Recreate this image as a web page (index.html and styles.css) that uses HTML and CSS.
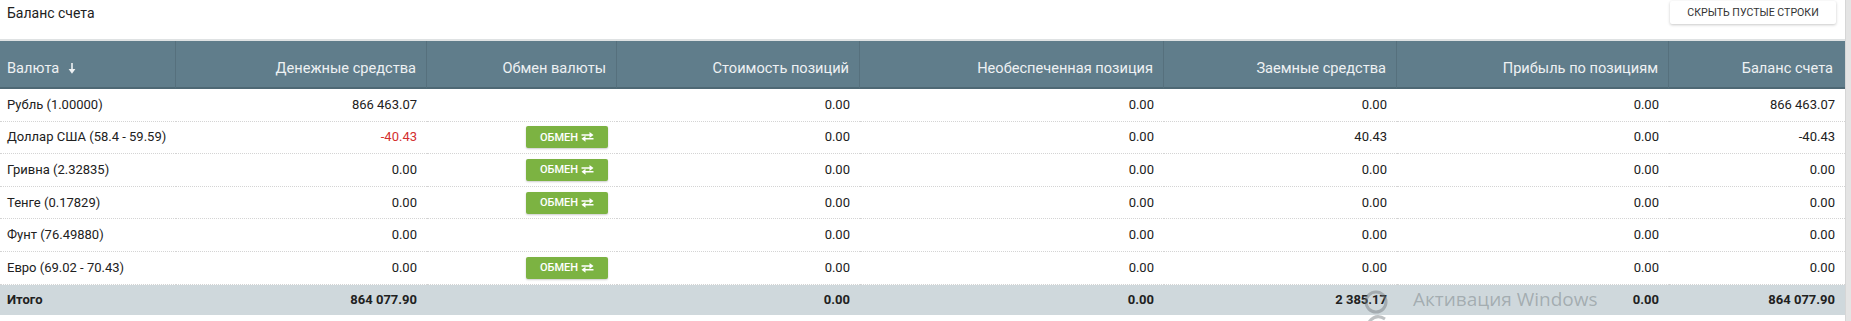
FILE: index.html
```html
<!DOCTYPE html>
<html lang="ru">
<head>
<meta charset="utf-8">
<title>Баланс счета</title>
<link rel="stylesheet" href="styles.css">
</head>
<body>
<div class="page">
  <div class="main">
    <div class="toolbar">
      <span class="title">Баланс счета</span>
      <button class="hide-btn">Скрыть пустые строки</button>
    </div>
    <table class="balance">
      <colgroup>
        <col class="c1"><col class="c2"><col class="c3"><col class="c4"><col class="c5"><col class="c6"><col class="c7"><col class="c8">
      </colgroup>
      <thead>
        <tr>
          <th class="left">Валюта <svg class="sort" width="8" height="11" viewBox="0 0 8 11"><path d="M4 0 V8" stroke="currentColor" stroke-width="1.6"/><path d="M0.6 6 H7.4 L4 10.8 Z" fill="currentColor"/></svg></th>
          <th>Денежные средства</th>
          <th>Обмен валюты</th>
          <th>Стоимость позиций</th>
          <th>Необеспеченная позиция</th>
          <th>Заемные средства</th>
          <th>Прибыль по позициям</th>
          <th>Баланс счета</th>
        </tr>
      </thead>
      <tbody>
        <tr>
          <td class="left">Рубль (1.00000)</td><td>866 463.07</td><td></td><td>0.00</td><td>0.00</td><td>0.00</td><td>0.00</td><td>866 463.07</td>
        </tr>
        <tr>
          <td class="left">Доллар США (58.4 - 59.59)</td><td class="neg">-40.43</td><td><button class="swap">ОБМЕН <svg width="13" height="10" viewBox="0 0 13 10"><path d="M0.5 2.2 H8.5 V0 L12.5 3 L8.5 6 V3.8 H0.5 Z" fill="currentColor"/><path d="M12.5 7 H4.5 V4.8 L0.5 7.8 L4.5 10.8 V8.6 H12.5 Z" fill="currentColor" transform="translate(0,-1)"/></svg></button></td><td>0.00</td><td>0.00</td><td>40.43</td><td>0.00</td><td>-40.43</td>
        </tr>
        <tr>
          <td class="left">Гривна (2.32835)</td><td>0.00</td><td><button class="swap">ОБМЕН <svg width="13" height="10" viewBox="0 0 13 10"><path d="M0.5 2.2 H8.5 V0 L12.5 3 L8.5 6 V3.8 H0.5 Z" fill="currentColor"/><path d="M12.5 7 H4.5 V4.8 L0.5 7.8 L4.5 10.8 V8.6 H12.5 Z" fill="currentColor" transform="translate(0,-1)"/></svg></button></td><td>0.00</td><td>0.00</td><td>0.00</td><td>0.00</td><td>0.00</td>
        </tr>
        <tr>
          <td class="left">Тенге (0.17829)</td><td>0.00</td><td><button class="swap">ОБМЕН <svg width="13" height="10" viewBox="0 0 13 10"><path d="M0.5 2.2 H8.5 V0 L12.5 3 L8.5 6 V3.8 H0.5 Z" fill="currentColor"/><path d="M12.5 7 H4.5 V4.8 L0.5 7.8 L4.5 10.8 V8.6 H12.5 Z" fill="currentColor" transform="translate(0,-1)"/></svg></button></td><td>0.00</td><td>0.00</td><td>0.00</td><td>0.00</td><td>0.00</td>
        </tr>
        <tr>
          <td class="left">Фунт (76.49880)</td><td>0.00</td><td></td><td>0.00</td><td>0.00</td><td>0.00</td><td>0.00</td><td>0.00</td>
        </tr>
        <tr>
          <td class="left">Евро (69.02 - 70.43)</td><td>0.00</td><td><button class="swap">ОБМЕН <svg width="13" height="10" viewBox="0 0 13 10"><path d="M0.5 2.2 H8.5 V0 L12.5 3 L8.5 6 V3.8 H0.5 Z" fill="currentColor"/><path d="M12.5 7 H4.5 V4.8 L0.5 7.8 L4.5 10.8 V8.6 H12.5 Z" fill="currentColor" transform="translate(0,-1)"/></svg></button></td><td>0.00</td><td>0.00</td><td>0.00</td><td>0.00</td><td>0.00</td>
        </tr>
      </tbody>
      <tfoot>
        <tr>
          <td class="left">Итого</td><td>864 077.90</td><td></td><td>0.00</td><td>0.00</td><td>2 385.17</td><td>0.00</td><td>864 077.90</td>
        </tr>
      </tfoot>
    </table>
  </div>
  <div class="scrollbar"></div>
  <div class="watermark">
    <svg class="wm-icon" width="34" height="34" viewBox="0 0 34 34"><circle cx="15" cy="13" r="10" fill="none" stroke="currentColor" stroke-width="3"/><path d="M8 33 Q15 24 24 30" fill="none" stroke="currentColor" stroke-width="3"/></svg>
    <span class="wm-text">Активация Windows</span>
  </div>
</div>
</body>
</html>
```

FILE: styles.css
```css
* { box-sizing: border-box; }

html, body {
  margin: 0;
  padding: 0;
  background: #ffffff;
}

body {
  font-family: Roboto, "Liberation Sans", Arial, sans-serif;
  color: #212121;
  font-size: 13px;
}

.page {
  position: relative;
  display: flex;
  width: 1851px;
  height: 321px;
  overflow: hidden;
}

.main {
  width: 1845px;
  flex: none;
}

.scrollbar {
  width: 6px;
  flex: none;
  background: #e4e4e4;
  border-left: 1px solid #d6d6d6;
}

.toolbar {
  height: 39px;
  display: flex;
  justify-content: space-between;
  align-items: flex-start;
  padding: 0 9px 0 7px;
}

.title {
  font-size: 14px;
  line-height: 16px;
  padding-top: 5px;
  color: #212121;
}

.hide-btn {
  margin-top: 1px;
  height: 23px;
  width: 166px;
  border: none;
  background: #ffffff;
  border-radius: 2px;
  box-shadow: 0 1px 3px rgba(0, 0, 0, 0.22);
  font-family: Roboto, "Liberation Sans", Arial, sans-serif;
  font-size: 10.6px;
  color: #333333;
  text-transform: uppercase;
  padding: 0;
}

.balance {
  width: 1845px;
  table-layout: fixed;
  border-collapse: separate;
  border-spacing: 0;
  border-top: 2px solid #dfe2e3;
}

.c1 { width: 176px; }
.c2 { width: 251px; }
.c3 { width: 190px; }
.c4 { width: 243px; }
.c5 { width: 304px; }
.c6 { width: 233px; }
.c7 { width: 272px; }
.c8 { width: 176px; }

.balance th {
  background: #607d8b;
  color: #eef1f3;
  font-weight: 400;
  font-size: 14.6px;
  line-height: 16px;
  height: 48px;
  padding: 19px 10px 11px 10px;
  text-align: right;
  border-right: 1px solid #56707d;
  border-bottom: 2px solid #4e6874;
  white-space: nowrap;
}

.balance th:last-child {
  border-right: none;
  padding-right: 12px;
}

.balance th.left,
.balance td.left {
  text-align: left;
  padding-left: 7px;
}

.sort {
  margin-left: 5px;
  vertical-align: -1px;
}

.balance td {
  height: 32.6px;
  padding: 0 10px;
  text-align: right;
  line-height: 16px;
  vertical-align: middle;
  border-bottom: 1px dotted #d4d4d4;
  white-space: nowrap;
}

.balance td.neg {
  color: #d32f2f;
}

.balance tfoot td {
  height: 30px;
  background: #cfd8dc;
  font-weight: 700;
  border-bottom: none;
}

.swap {
  display: inline-flex;
  align-items: center;
  justify-content: center;
  gap: 3px;
  width: 82px;
  height: 22px;
  margin-right: -1px;
  border: none;
  border-radius: 2px;
  background: #7cb342;
  color: #ffffff;
  font-family: Roboto, "Liberation Sans", Arial, sans-serif;
  font-size: 11px;
  font-weight: 500;
  box-shadow: 0 1px 2px rgba(0, 0, 0, 0.2);
  padding: 0;
  vertical-align: middle;
}

.watermark {
  position: absolute;
  left: 1361px;
  top: 289px;
  display: flex;
  align-items: flex-start;
  gap: 18px;
  color: rgba(110, 118, 122, 0.45);
  pointer-events: none;
}

.wm-icon {
  margin-top: 0;
}

.wm-text {
  font-family: "Open Sans", Roboto, sans-serif;
  font-size: 19px;
  line-height: 20px;
  font-weight: 400;
}
```
